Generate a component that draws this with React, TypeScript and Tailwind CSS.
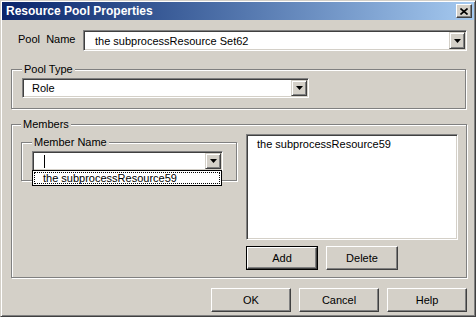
import type { ReactNode } from 'react';

const raised =
  'bg-[#D4D0C8] border border-t-white border-l-white border-r-[#404040] border-b-[#404040] shadow-[inset_-1px_-1px_0_#808080]';
const sunken =
  'bg-white border border-t-[#808080] border-l-[#808080] border-r-white border-b-white shadow-[inset_1px_1px_0_#404040,inset_-1px_-1px_0_#D4D0C8] p-px';
const etched =
  'border border-[#808080] shadow-[inset_1px_1px_0_#fff,1px_1px_0_#fff]';

function DownArrow() {
  return (
    <svg width="7" height="4" viewBox="0 0 7 4">
      <path d="M0 0h7L3.5 4z" fill="#000" />
    </svg>
  );
}

function ArrowButton() {
  return (
    <div className="w-[16px] self-stretch flex items-center justify-center bg-[#D4D0C8] border border-t-[#D4D0C8] border-l-[#D4D0C8] border-r-[#404040] border-b-[#404040] shadow-[inset_1px_1px_0_#fff,inset_-1px_-1px_0_#808080]">
      <DownArrow />
    </div>
  );
}

function Combo({ children, className, padLeft }: { children?: ReactNode; className: string; padLeft: string }) {
  return (
    <div className={`flex ${sunken} ${className}`}>
      <div className={`flex-1 flex items-center ${padLeft}`}>{children}</div>
      <ArrowButton />
    </div>
  );
}

function Group({ title, className, children }: { title: string; className: string; children: ReactNode }) {
  return (
    <fieldset className={`${etched} ${className}`}>
      <legend className="px-[2px] leading-[13px] bg-[#D4D0C8]">{title}</legend>
      {children}
    </fieldset>
  );
}

function Button({ label, className = '', isDefault = false }: { label: string; className?: string; isDefault?: boolean }) {
  if (isDefault) {
    return (
      <div className={`border border-black ${className}`}>
        <div className={`h-full flex items-center justify-center ${raised}`}>{label}</div>
      </div>
    );
  }
  return <div className={`flex items-center justify-center ${raised} ${className}`}>{label}</div>;
}

export default function App() {
  return (
    <div className="w-[476px] h-[317px] overflow-hidden bg-[#D4D0C8] border border-t-[#D4D0C8] border-l-[#D4D0C8] border-r-[#404040] border-b-[#404040] shadow-[inset_1px_1px_0_#fff,inset_-1px_-1px_0_#808080] p-px flex flex-col text-[11px] leading-[13px] text-black font-['Liberation_Sans',Arial,sans-serif]">
      {/* title bar */}
      <div className="h-[18px] flex items-center pl-[4px] pr-[2px] bg-linear-to-r from-[#0A246A] to-[#A6CAF0]">
        <span className="text-white font-bold text-[12px]">Resource Pool Properties</span>
        <div className={`ml-auto w-[16px] h-[14px] flex items-center justify-center ${raised}`}>
          <svg width="8" height="7" viewBox="0 0 8 7">
            <path d="M0.5 0.5l7 6M7.5 0.5l-7 6" stroke="#000" strokeWidth="1.6" />
          </svg>
        </div>
      </div>

      <div className="flex flex-col pl-[9px] pr-[7px]">
        {/* pool name */}
        <div className="mt-[10px] flex items-start">
          <div className="w-[72px] pl-[7px] pt-[3px] whitespace-pre">Pool  Name</div>
          <Combo className="w-[384px] h-[21px]" padLeft="pl-[10px] pt-px">
            the subprocessResource Set62
          </Combo>
        </div>

        {/* pool type */}
        <Group title="Pool Type" className="mt-[12px] w-[455px] pl-[10px] pt-[2px] pb-[10px]">
          <Combo className="w-[287px] h-[20px]" padLeft="pl-[8px]">
            Role
          </Combo>
        </Group>

        {/* members */}
        <Group title="Members" className="mt-[9px] w-[455px] pl-[9px] pr-[8px] pt-[3px] pb-[7px]">
          <div className="flex items-start">
            <div className="relative mt-[2px] w-[216px]">
              <Group title="Member Name" className="w-[216px] pl-[10px] pt-[2px] pb-[9px]">
                <Combo className="w-[191px] h-[20px]" padLeft="pl-[10px]">
                  <div className="w-px h-[13px] bg-black" />
                </Combo>
              </Group>
              {/* open dropdown list */}
              <div className="absolute left-[11px] top-[34px] w-[190px] h-[16px] bg-white border border-black p-px">
                <div className="h-full border border-dotted border-black flex items-center pl-[8px]">
                  the subprocessResource59
                </div>
              </div>
            </div>
            <div className="ml-[9px] flex flex-col">
              <div className={`w-[212px] h-[106px] ${sunken}`}>
                <div className="pl-[9px] pt-[2px]">the subprocessResource59</div>
              </div>
              <div className="mt-[6px] flex gap-[8px]">
                <Button label="Add" isDefault className="w-[72px] h-[24px]" />
                <Button label="Delete" className="w-[72px] h-[24px]" />
              </div>
            </div>
          </div>
        </Group>

        {/* dialog buttons */}
        <div className="mt-[10px] flex justify-end gap-[8px]">
          <Button label="OK" className="w-[80px] h-[24px]" />
          <Button label="Cancel" className="w-[80px] h-[24px]" />
          <Button label="Help" className="w-[80px] h-[24px]" />
        </div>
      </div>
    </div>
  );
}
